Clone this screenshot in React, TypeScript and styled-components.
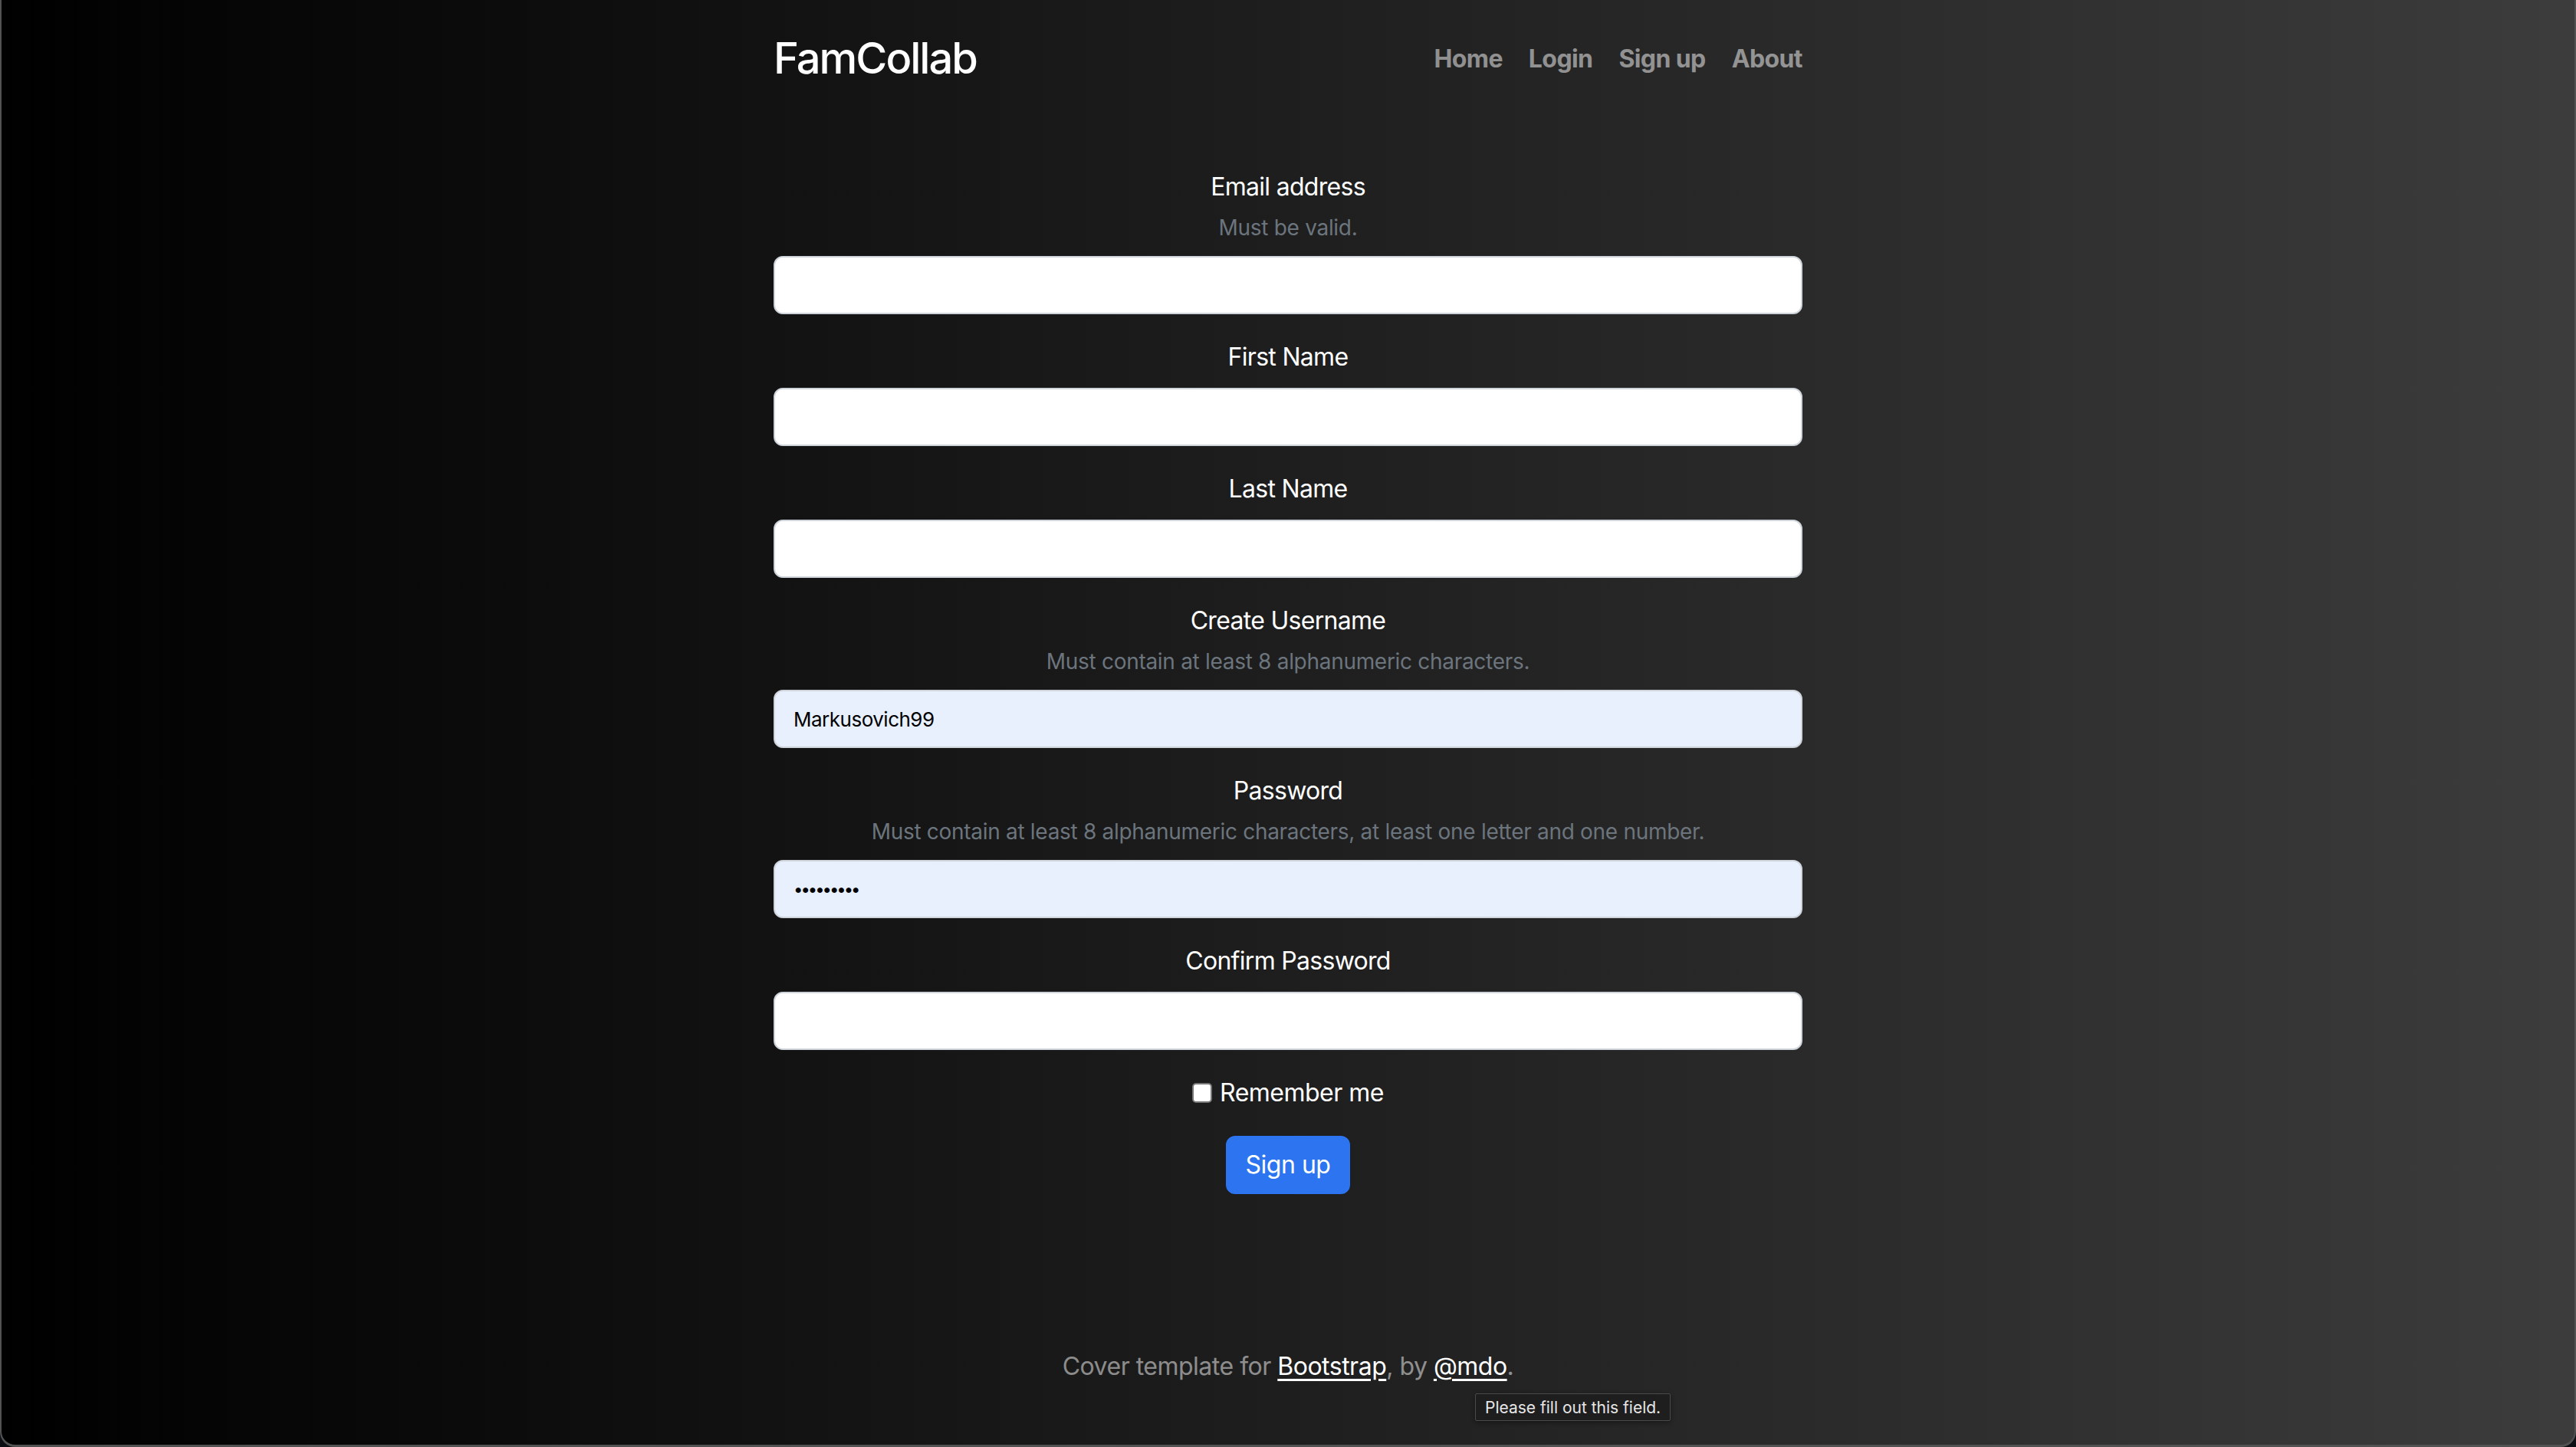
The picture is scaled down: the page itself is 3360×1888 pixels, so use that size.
import React from 'react';
import styled, { createGlobalStyle } from 'styled-components';

const GlobalStyle = createGlobalStyle`
  html,
  body {
    margin: 0;
    padding: 0;
    background: #0c1015;
  }
  #root {
    width: 3360px;
    height: 1888px;
  }
  * {
    box-sizing: border-box;
  }
`;

const Window = styled.div`
  position: relative;
  width: 3360px;
  height: 1888px;
  border: 2px solid #525252;
  border-top: none;
  border-bottom-width: 3px;
  border-radius: 0 0 20px 20px;
  background: linear-gradient(to right, #000000 0%, #3c3c3c 100%);
  font-family: Inter, 'Noto Sans', sans-serif;
  color: #fff;
  overflow: hidden;
`;

const Cover = styled.div`
  width: 1342px;
  height: 100%;
  margin: 0 auto;
  display: flex;
  flex-direction: column;
`;

const Masthead = styled.header`
  display: flex;
  justify-content: space-between;
  align-items: center;
  padding-top: 43px;
`;

const Brand = styled.h3`
  margin: 0;
  font-size: 56px;
  font-weight: 500;
  line-height: 1.2;
  letter-spacing: -2px;
`;

const Nav = styled.nav`
  display: flex;
  gap: 34px;
`;

const NavLink = styled.a`
  padding: 8px 0;
  font-size: 32px;
  font-weight: 700;
  line-height: 48px;
  color: rgba(255, 255, 255, 0.5);
  text-decoration: none;
  letter-spacing: -0.6px;
`;

const Form = styled.form`
  display: flex;
  flex-direction: column;
  margin-top: 110px;
`;

const Field = styled.div`
  display: flex;
  flex-direction: column;
  margin-bottom: 32px;
`;

const Label = styled.label<{ $hasHint?: boolean }>`
  margin-bottom: ${(p) => (p.$hasHint ? '8px' : '16px')};
  font-size: 32px;
  line-height: 48px;
  text-align: center;
  letter-spacing: -0.7px;
`;

const Hint = styled.div`
  margin-bottom: 16px;
  font-size: 28px;
  line-height: 42px;
  color: #6c757d;
  text-align: center;
  letter-spacing: -0.3px;
`;

const Input = styled.input<{ $filled?: boolean }>`
  height: 76px;
  width: 100%;
  padding: 0 24px;
  border: 2px solid #ced4da;
  border-radius: 12px;
  background: ${(p) => (p.$filled ? '#e8f0fe' : '#ffffff')};
  color: #000;
  font-family: Inter, 'Noto Sans', sans-serif;
  font-size: 26px;
  letter-spacing: -0.5px;
  outline: none;

  &[type='password'] {
    font-size: 22px;
    letter-spacing: -3px;
  }
`;

const CheckRow = styled.div`
  display: flex;
  justify-content: center;
  align-items: center;
  gap: 10px;
  margin-bottom: 32px;
  font-size: 32px;
  line-height: 48px;
  letter-spacing: -0.5px;
`;

const Checkbox = styled.input`
  appearance: none;
  margin: 0;
  width: 26px;
  height: 26px;
  border: 2px solid #767676;
  border-radius: 5px;
  background: #fff;
`;

const SubmitButton = styled.button`
  align-self: center;
  padding: 12px 24px;
  border: 2px solid #2c74f0;
  border-radius: 12px;
  background: #2c74f0;
  color: #fff;
  font-family: Inter, 'Noto Sans', sans-serif;
  font-size: 32px;
  line-height: 48px;
  letter-spacing: -0.5px;
`;

const Footer = styled.footer`
  margin-top: auto;
  padding-bottom: 78px;
  font-size: 32px;
  line-height: 48px;
  text-align: center;
  color: rgba(255, 255, 255, 0.5);
  letter-spacing: -0.5px;
`;

const FooterLink = styled.a`
  color: #fff;
  text-decoration: underline;
  text-underline-offset: 5px;
`;

const ValidationBubble = styled.div`
  position: absolute;
  left: 1922px;
  top: 1818px;
  height: 36px;
  padding: 0 12px;
  display: flex;
  align-items: center;
  border: 1px solid #4a4a4a;
  border-radius: 2px;
  background: #1e1e1e;
  color: #e6e6e6;
  font-size: 21px;
  box-shadow: 0 2px 6px rgba(0, 0, 0, 0.4);
`;

const fields = [
  { label: 'Email address', hint: 'Must be valid.', type: 'email' },
  { label: 'First Name', type: 'text' },
  { label: 'Last Name', type: 'text' },
  {
    label: 'Create Username',
    hint: 'Must contain at least 8 alphanumeric characters.',
    type: 'text',
    value: 'Markusovich99',
  },
  {
    label: 'Password',
    hint: 'Must contain at least 8 alphanumeric characters, at least one letter and one number.',
    type: 'password',
    value: 'abcd12345',
  },
  { label: 'Confirm Password', type: 'password' },
];

export default function App() {
  return (
    <>
      <GlobalStyle />
      <Window>
        <Cover>
          <Masthead>
            <Brand>FamCollab</Brand>
            <Nav>
              <NavLink href="#">Home</NavLink>
              <NavLink href="#">Login</NavLink>
              <NavLink href="#">Sign up</NavLink>
              <NavLink href="#">About</NavLink>
            </Nav>
          </Masthead>

          <Form onSubmit={(e) => e.preventDefault()}>
            {fields.map((f) => (
              <Field key={f.label}>
                <Label $hasHint={!!f.hint}>{f.label}</Label>
                {f.hint && <Hint>{f.hint}</Hint>}
                <Input
                  type={f.type}
                  $filled={!!f.value}
                  defaultValue={f.value}
                  readOnly
                />
              </Field>
            ))}
            <CheckRow>
              <Checkbox type="checkbox" />
              <span>Remember me</span>
            </CheckRow>
            <SubmitButton type="submit">Sign up</SubmitButton>
          </Form>

          <Footer>
            Cover template for <FooterLink href="#">Bootstrap</FooterLink>, by{' '}
            <FooterLink href="#">@mdo</FooterLink>.
          </Footer>
        </Cover>
        <ValidationBubble>Please fill out this field.</ValidationBubble>
      </Window>
    </>
  );
}
